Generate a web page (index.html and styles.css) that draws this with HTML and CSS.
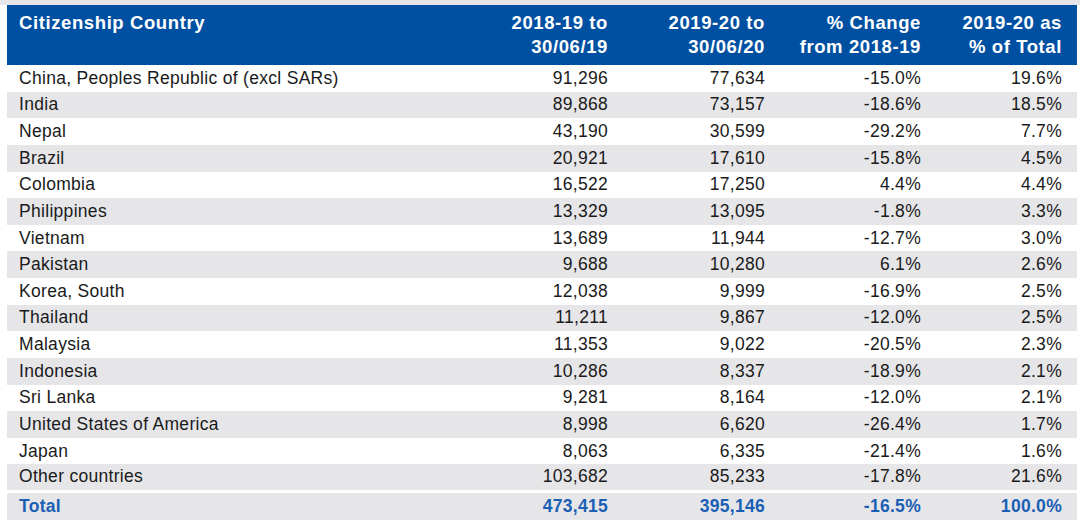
FILE: index.html
```html
<!DOCTYPE html>
<html>
<head>
<meta charset="utf-8">
<link rel="stylesheet" href="styles.css">
</head>
<body>
<div class="strip"></div>
<table class="data">
<colgroup>
<col class="c1"><col class="c2"><col class="c3"><col class="c4"><col class="c5">
</colgroup>
<thead>
<tr><th class="l">Citizenship Country</th><th>2018-19 to<br>30/06/19</th><th>2019-20 to<br>30/06/20</th><th>% Change<br>from 2018-19</th><th>2019-20 as<br>% of Total</th></tr>
</thead>
<tbody>
<tr><td class="l">China, Peoples Republic of (excl SARs)</td><td>91,296</td><td>77,634</td><td>-15.0%</td><td>19.6%</td></tr>
<tr class="g"><td class="l">India</td><td>89,868</td><td>73,157</td><td>-18.6%</td><td>18.5%</td></tr>
<tr><td class="l">Nepal</td><td>43,190</td><td>30,599</td><td>-29.2%</td><td>7.7%</td></tr>
<tr class="g"><td class="l">Brazil</td><td>20,921</td><td>17,610</td><td>-15.8%</td><td>4.5%</td></tr>
<tr><td class="l">Colombia</td><td>16,522</td><td>17,250</td><td>4.4%</td><td>4.4%</td></tr>
<tr class="g"><td class="l">Philippines</td><td>13,329</td><td>13,095</td><td>-1.8%</td><td>3.3%</td></tr>
<tr><td class="l">Vietnam</td><td>13,689</td><td>11,944</td><td>-12.7%</td><td>3.0%</td></tr>
<tr class="g"><td class="l">Pakistan</td><td>9,688</td><td>10,280</td><td>6.1%</td><td>2.6%</td></tr>
<tr><td class="l">Korea, South</td><td>12,038</td><td>9,999</td><td>-16.9%</td><td>2.5%</td></tr>
<tr class="g"><td class="l">Thailand</td><td>11,211</td><td>9,867</td><td>-12.0%</td><td>2.5%</td></tr>
<tr><td class="l">Malaysia</td><td>11,353</td><td>9,022</td><td>-20.5%</td><td>2.3%</td></tr>
<tr class="g"><td class="l">Indonesia</td><td>10,286</td><td>8,337</td><td>-18.9%</td><td>2.1%</td></tr>
<tr><td class="l">Sri Lanka</td><td>9,281</td><td>8,164</td><td>-12.0%</td><td>2.1%</td></tr>
<tr class="g"><td class="l">United States of America</td><td>8,998</td><td>6,620</td><td>-26.4%</td><td>1.7%</td></tr>
<tr><td class="l">Japan</td><td>8,063</td><td>6,335</td><td>-21.4%</td><td>1.6%</td></tr>
<tr class="g"><td class="l">Other countries</td><td>103,682</td><td>85,233</td><td>-17.8%</td><td>21.6%</td></tr>
</tbody>
<tfoot>
<tr class="total"><td class="l">Total</td><td>473,415</td><td>395,146</td><td>-16.5%</td><td>100.0%</td></tr>
</tfoot>
</table>
</body>
</html>
```
FILE: styles.css
```css
html, body {
  margin: 0;
  padding: 0;
  background: #ffffff;
}
body {
  font-family: "Liberation Sans", Arial, sans-serif;
  color: #1a1a1a;
  overflow: hidden;
}
.strip {
  height: 5px;
  background: #e6e6e8;
}
.data {
  margin-left: 7px;
  width: 1070px;
  border-collapse: collapse;
  table-layout: fixed;
}
.c1 { width: 459px; }
.c2 { width: 157px; }
.c3 { width: 157px; }
.c4 { width: 156px; }
.c5 { width: 141px; }
.data th {
  background: #0050a2;
  color: #ffffff;
  font-weight: bold;
  font-size: 18.5px;
  letter-spacing: 0.6px;
  line-height: 24px;
  text-align: right;
  vertical-align: top;
  padding: 6px 15px 6px 12px;
  height: 48px;
  white-space: nowrap;
}
.data th.l, .data td.l {
  text-align: left;
}
.data td {
  font-size: 17.5px;
  letter-spacing: 0.3px;
  height: 26.625px;
  padding: 0 15px 0 12px;
  text-align: right;
  vertical-align: middle;
  box-sizing: border-box;
  white-space: nowrap;
}
.data tr.g td {
  background: #e6e6e9;
}
.data tfoot tr.total td {
  background: #e6e6e9;
  color: #1a5fb4;
  font-weight: bold;
  height: 29px;
  border-top: 3px solid #ffffff;
}
```
